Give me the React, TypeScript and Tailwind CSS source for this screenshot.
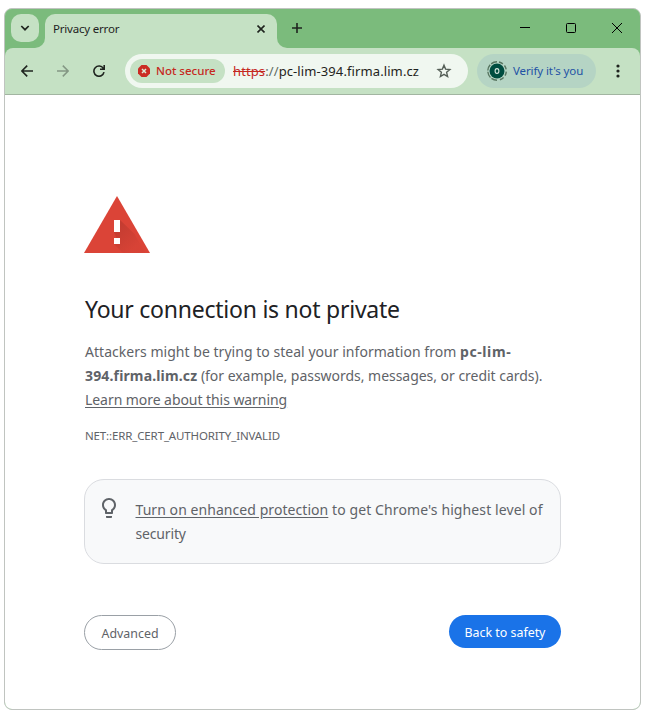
import React from "react";

function TabStrip() {
  return (
    <div className="flex h-[39px] bg-[#c5e1c4] text-[#1f241f]">
      <div className="flex w-10 rounded-br-[10px] bg-[#7bbb7c] pl-1.5 pt-[5px]">
        <button aria-label="Search tabs" className="flex h-7 w-7 items-center justify-center rounded-[10px] bg-[#c5e1c4]">
          <svg width="10" height="8" viewBox="0 0 10 8" fill="none" stroke="currentColor" strokeWidth="1.7">
            <path d="M1.3 2 L5 5.7 L8.7 2" />
          </svg>
        </button>
      </div>
      <div className="w-[232px] bg-[#7bbb7c]">
        <div className="mt-[5px] flex h-[34px] items-center justify-between rounded-t-[10px] bg-[#c5e1c4] pb-[5px] pl-2 pr-3">
          <span className="whitespace-nowrap text-[11.5px] leading-4 tracking-[-0.2px]">Privacy error</span>
          <svg width="8" height="8" viewBox="0 0 8 8" stroke="currentColor" strokeWidth="1.6">
            <path d="M.5 .5 L7.5 7.5 M7.5 .5 L.5 7.5" />
          </svg>
        </div>
      </div>
      <div className="flex flex-1 justify-between rounded-bl-[10px] bg-[#7bbb7c] pl-[15px] pr-[18px] pt-[14px]">
        <svg width="10" height="10" viewBox="0 0 10 10" stroke="currentColor" strokeWidth="1.6">
          <path d="M5 0 V10 M0 5 H10" />
        </svg>
        <div className="flex gap-9 text-black">
          <svg width="10" height="10" viewBox="0 0 10 10" stroke="currentColor"><path d="M0 4.5 H10" /></svg>
          <svg width="10" height="10" viewBox="0 0 10 10" fill="none" stroke="currentColor"><rect x=".5" y=".5" width="9" height="9" rx="1" /></svg>
          <svg width="10" height="10" viewBox="0 0 10 10" stroke="currentColor"><path d="M0 0 L10 10 M10 0 L0 10" /></svg>
        </div>
      </div>
    </div>
  );
}

function Toolbar() {
  return (
    <div className="flex h-[47px] items-start rounded-t-lg border-b border-[#a2b5a1] bg-[#c5e1c4] pt-1.5">
      <div className="flex h-[34px] w-[120px] items-center gap-6 pl-4">
        <svg width="12" height="12" viewBox="0 0 12 12" fill="none" stroke="#1f241f" strokeWidth="1.6">
          <path d="M12 6 H1 M6.2 .6 L.9 6 L6.2 11.4" />
        </svg>
        <svg width="12" height="12" viewBox="0 0 12 12" fill="none" stroke="#849784" strokeWidth="1.5">
          <path d="M0 6 H11 M5.8 .6 L11.1 6 L5.8 11.4" />
        </svg>
        <svg width="12" height="12" viewBox="0 0 12 12" fill="none" stroke="#1f241f" strokeWidth="1.6">
          <path d="M10.3 3.4 A5.1 5.1 0 1 0 11 7.2 M11.2 0 V4.2 H7" />
        </svg>
      </div>
      <div className="flex h-[34px] w-[343px] items-center rounded-full bg-[#f0f7f0] pl-[5px]">
        <div className="flex h-6 w-[95px] shrink-0 items-center rounded-full bg-[#c5e1c4] pl-2">
          <svg width="12" height="12" viewBox="0 0 12 12">
            <path d="M3.5 0 H8.5 L12 3.5 V8.5 L8.5 12 H3.5 L0 8.5 V3.5 Z" fill="#cb2b24" />
            <path d="M4 4 L8 8 M8 4 L4 8" stroke="#dcebd9" strokeWidth="1.5" />
          </svg>
          <span className="ml-1.5 whitespace-nowrap text-[11.5px] font-medium leading-4 text-[#c5281f]">Not secure</span>
        </div>
        <div className="ml-2 w-[203px] whitespace-nowrap text-[13px] leading-5 tracking-[0.1px] text-[#1f2320]">
          <span className="text-[#c5281f] line-through">https</span><span className="text-[#5f6b62]">://</span>pc-lim-394.firma.lim.cz
        </div>
        <svg width="16" height="16" viewBox="0 0 16 16" fill="none" stroke="#555f57" strokeWidth="1.4">
          <path d="M8 2.2 L9.6 6.1 L13.9 6.5 L10.6 9.3 L11.6 13.5 L8 11.3 L4.4 13.5 L5.4 9.3 L2.1 6.5 L6.4 6.1 Z" />
        </svg>
      </div>
      <div className="ml-[9px] flex h-[34px] w-[119px] items-center rounded-full bg-[#b5d4c4] pl-2.5">
        <svg width="20" height="20" viewBox="0 0 20 20">
          <path d="M10 .8 A9.2 9.2 0 0 0 10 19.2" fill="none" stroke="#587661" strokeWidth="1.4" strokeDasharray="6.3 1.3" />
          <path d="M12 1 A9.2 9.2 0 0 1 12 19" fill="none" stroke="#587661" strokeWidth="1.4" strokeDasharray="4.3 2.2" />
          <circle cx="10" cy="10" r="7.5" fill="#004d40" />
          <ellipse cx="10" cy="10" rx="1.9" ry="2.4" fill="none" stroke="#d5e5dd" strokeWidth="1.1" />
        </svg>
        <span className="ml-1.5 whitespace-nowrap text-[11.5px] leading-4 tracking-[-0.1px] text-[#2352a5]">Verify it's you</span>
      </div>
      <svg className="ml-5 mt-[10px]" width="4" height="14" viewBox="0 0 4 14" fill="#1f241f">
        <circle cx="2" cy="2" r="1.6" /><circle cx="2" cy="7" r="1.6" /><circle cx="2" cy="12" r="1.6" />
      </svg>
    </div>
  );
}

function WarningIcon() {
  return (
    <svg width="66" height="57" viewBox="0 0 66 57">
      <defs>
        <linearGradient id="shade" gradientUnits="userSpaceOnUse" x1="33" y1="30" x2="52" y2="50">
          <stop offset="0" stopColor="#9c2f27" stopOpacity=".38" />
          <stop offset="1" stopColor="#9c2f27" stopOpacity=".06" />
        </linearGradient>
      </defs>
      <path d="M33 0 L66 57 H0 Z" fill="#db4437" />
      <path d="M36 24 L50.5 38 L61.5 57 H39 L30 48 L34 46 L30 36 Z" fill="url(#shade)" />
      <path d="M30 24 H36 V36 H30 Z M30 42 H36 V48 H30 Z" fill="#fff" />
    </svg>
  );
}

function BulbIcon() {
  return (
    <svg className="shrink-0" width="14" height="20" viewBox="5 2 14 20" fill="#5f6368">
      <path d="M9 21c0 .55.45 1 1 1h4c.55 0 1-.45 1-1v-1H9v1zm3-19C8.14 2 5 5.14 5 9c0 2.38 1.19 4.47 3 5.74V17c0 .55.45 1 1 1h6c.55 0 1-.45 1-1v-2.26c1.81-1.27 3-3.36 3-5.74 0-3.86-3.14-7-7-7zm2.85 11.1l-.85.6V16h-4v-2.3l-.85-.6C7.8 12.16 7 10.63 7 9c0-2.76 2.24-5 5-5s5 2.24 5 5c0 1.63-.8 3.16-2.15 4.1z" />
    </svg>
  );
}

export default function App() {
  return (
    <div className="h-[719px] w-[646px] bg-white pl-1 pt-2 font-['Noto_Sans',sans-serif]">
      <div className="flex h-[702px] w-[637px] flex-col overflow-hidden rounded-lg border border-[#c0c4c0] bg-[#7bbb7c]">
        <TabStrip />
        <Toolbar />
        <main className="flex-1 bg-white pl-[79px] pr-[79px] pt-[101px] text-[#5f6368]">
          <WarningIcon />
          <h1 className="mt-[39px] whitespace-nowrap pl-px text-[23px] leading-[34px] tracking-[-0.24px] text-[#202124]">Your connection is not private</h1>
          <p className="mt-3.5 whitespace-nowrap pl-px text-[14px] leading-6">
            <span className="tracking-[0.03px]">Attackers might be trying to steal your information from </span><b className="tracking-[0.6px]">pc-lim-</b><br />
            <b className="tracking-[0.15px]">394.firma.lim.cz</b><span className="tracking-[-0.03px]"> (for example, passwords, messages, or credit cards).</span><br />
            <a className="tracking-[-0.06px] underline underline-offset-2">Learn more about this warning</a>
          </p>
          <p className="mt-3 whitespace-nowrap pl-px text-[11.5px] leading-6 tracking-[-0.14px]">NET::ERR_CERT_AUTHORITY_INVALID</p>
          <div className="mt-[31px] flex h-[85px] w-[477px] rounded-[20px] border border-[#dadce0] bg-[#f8f9fa] pl-[17px] pt-[18px]">
            <BulbIcon />
            <p className="ml-[19.5px] whitespace-nowrap text-[14px] leading-6 tracking-[0.1px]">
              <a className="tracking-[0.06px] underline underline-offset-2">Turn on enhanced protection</a> to get Chrome's highest level of<br />
              <span className="tracking-[-0.15px]">security</span>
            </p>
          </div>
          <div className="mt-[51px] flex w-[477px] items-start justify-between text-[12.4px] leading-4">
            <button className="h-[35px] w-[92px] whitespace-nowrap rounded-full border border-[#9aa0a6] pt-0.5">Advanced</button>
            <button className="h-[33px] w-28 whitespace-nowrap rounded-full bg-[#1a73e8] pt-0.5 text-white">Back to safety</button>
          </div>
        </main>
      </div>
    </div>
  );
}
